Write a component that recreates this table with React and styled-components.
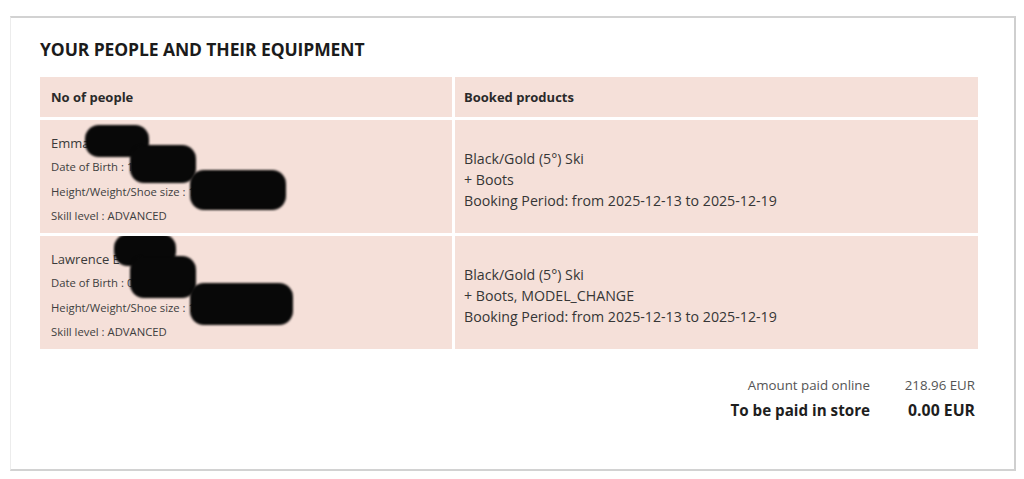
import React from 'react';
import styled, { createGlobalStyle } from 'styled-components';

const GlobalStyle = createGlobalStyle`
  html, body {
    margin: 0;
    padding: 0;
    background: #ffffff;
  }
  body {
    font-family: 'Open Sans', 'Noto Sans', sans-serif;
    color: #333;
  }
`;

const Page = styled.div`
  width: 1024px;
  height: 479px;
  padding: 16px 8px 8px 10px;
  box-sizing: border-box;
`;

const Card = styled.div`
  height: 455px;
  box-sizing: border-box;
  border-top: 2px solid #d2d2d2;
  border-right: 2px solid #cfcfcf;
  border-bottom: 2px solid #d2d2d2;
  border-left: 1px solid #ececec;
  padding: 19px 36px 0 29px;
`;

const Title = styled.h2`
  margin: 0 0 16px 0;
  font-size: 17.5px;
  font-weight: 700;
  letter-spacing: -0.1px;
  color: #1b1b1b;
  line-height: 24px;
`;

const Table = styled.div`
  display: grid;
  grid-template-columns: 412px 1fr;
  gap: 3px 3px;
`;

const HeadCell = styled.div`
  background: #f5e0d9;
  height: 40px;
  display: flex;
  align-items: center;
  padding-left: ${p => (p.$right ? '9px' : '11px')};
  font-size: 13px;
  font-weight: 700;
  color: #2a2a2a;
`;

const PersonCell = styled.div`
  position: relative;
  background: #f5e0d9;
  height: 113px;
  box-sizing: border-box;
  padding: 13px 11px 0;
  overflow: hidden;
`;

const Name = styled.div`
  font-size: 13px;
  color: #3a3a3a;
  line-height: 20px;
  margin-bottom: 2px;
`;

const Detail = styled.div`
  font-size: 11.3px;
  color: #3e3e3e;
  line-height: 24.5px;
`;

const ProductCell = styled.div`
  background: #f5e0d9;
  height: 113px;
  box-sizing: border-box;
  display: flex;
  flex-direction: column;
  justify-content: center;
  padding: 6px 0 0 9px;
  font-size: 14.2px;
  color: #363636;
  line-height: 21px;
`;

const Blob = styled.span`
  position: absolute;
  background: #080808;
  border-radius: 14px;
  filter: blur(1.2px);
`;

const Summary = styled.div`
  display: grid;
  grid-template-columns: auto 105px;
  justify-content: end;
  align-items: baseline;
  margin-top: 26px;
  padding-right: 3px;
`;

const Label = styled.div`
  text-align: right;
  font-size: ${p => (p.$strong ? '15.2px' : '13.3px')};
  font-weight: ${p => (p.$strong ? 700 : 400)};
  color: ${p => (p.$strong ? '#1e1e1e' : '#555')};
  line-height: ${p => (p.$strong ? '30px' : '20px')};
`;

const Value = styled(Label)`
  font-size: ${p => (p.$strong ? '15.8px' : '13.3px')};
`;

const people = [
  {
    name: 'Emma E',
    dob: '1',
    size: '1',
    skill: 'ADVANCED',
    blobs: [
      { left: 45, top: 5, width: 64, height: 32 },
      { left: 90, top: 25, width: 66, height: 38 },
      { left: 150, top: 50, width: 96, height: 40 },
    ],
    products: ['Black/Gold (5°) Ski', '+ Boots'],
  },
  {
    name: 'Lawrence E',
    dob: '0',
    size: '1',
    skill: 'ADVANCED',
    blobs: [
      { left: 74, top: -2, width: 62, height: 32 },
      { left: 90, top: 20, width: 66, height: 42 },
      { left: 150, top: 47, width: 103, height: 42 },
    ],
    products: ['Black/Gold (5°) Ski', '+ Boots, MODEL_CHANGE'],
  },
];

export default function App() {
  return (
    <>
      <GlobalStyle />
      <Page>
        <Card>
          <Title>YOUR PEOPLE AND THEIR EQUIPMENT</Title>
          <Table>
            <HeadCell>No of people</HeadCell>
            <HeadCell $right>Booked products</HeadCell>
            {people.map(p => (
              <React.Fragment key={p.name}>
                <PersonCell>
                  <Name>{p.name}</Name>
                  <Detail>Date of Birth : {p.dob}</Detail>
                  <Detail>Height/Weight/Shoe size : {p.size}</Detail>
                  <Detail>Skill level : {p.skill}</Detail>
                  {p.blobs.map((b, i) => (
                    <Blob
                      key={i}
                      style={{ left: b.left, top: b.top, width: b.width, height: b.height }}
                    />
                  ))}
                </PersonCell>
                <ProductCell>
                  {p.products.map(line => (
                    <div key={line}>{line}</div>
                  ))}
                  <div>Booking Period: from 2025-12-13 to 2025-12-19</div>
                </ProductCell>
              </React.Fragment>
            ))}
          </Table>
          <Summary>
            <Label>Amount paid online</Label>
            <Value>218.96 EUR</Value>
            <Label $strong>To be paid in store</Label>
            <Value $strong>0.00 EUR</Value>
          </Summary>
        </Card>
      </Page>
    </>
  );
}
